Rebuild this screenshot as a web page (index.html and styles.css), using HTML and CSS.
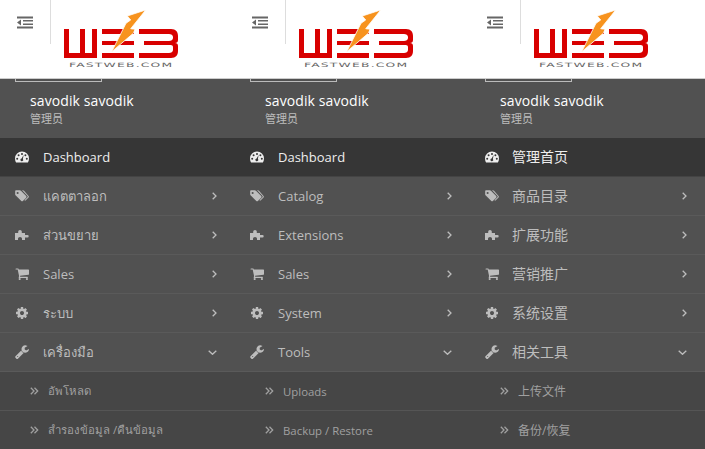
FILE: index.html
```html
<!DOCTYPE html>
<html lang="en">
<head>
  <meta charset="UTF-8">
  <meta name="viewport" content="width=device-width, initial-scale=1.0">
  <title>Admin menu</title>
  <link rel="stylesheet" href="styles.css">
</head>
<body>

  <svg class="sprites" aria-hidden="true">
    <symbol id="i-outdent" viewBox="0 0 16 12">
      <path d="M0 0h16v2H0zM0 10h16v2H0zM6 3.5h10v1.6H6zM6 6.9h10v1.6H6zM4 3v6L0 6z"/>
    </symbol>
    <symbol id="i-gauge" viewBox="0 0 14 11">
      <path fill-rule="evenodd" d="M7 0a7 7 0 0 1 7 7c0 1.500-.4 2.900-1.100 4H1.100A7.900 7.900 0 0 1 0 7a7 7 0 0 1 7-7zM7 1.400a1 1 0 1 0 0 2 1 1 0 0 0 0-2zM3.600 2.800a1 1 0 1 0 0 2 1 1 0 0 0 0-2zM10.400 2.800a1 1 0 1 0 0 2 1 1 0 0 0 0-2zM2.200 6.200a1 1 0 1 0 0 2 1 1 0 0 0 0-2zM11.800 6.200a1 1 0 1 0 0 2 1 1 0 0 0 0-2zM8.600 3.400 6.600 6.900a1.400 1.400 0 1 0 1.300.500z"/>
    </symbol>
    <symbol id="i-tags" viewBox="0 0 16 13">
      <path fill-rule="evenodd" d="M1 0h4.500c.5 0 1 .2 1.300.6l6 6c.5.5.5 1.300 0 1.800l-3.800 3.800c-.5.5-1.300.5-1.800 0l-6-6C.8 5.800.2 5.300.2 4.800V.8C.2.400.6 0 1 0zM3 1.800a1.200 1.200 0 1 0 0 2.400 1.200 1.200 0 0 0 0-2.400z"/>
      <path d="M8 0h1c.5 0 1 .2 1.300.6l5.200 5.800c.5.600.5 1.300 0 1.800l-3.800 3.800-.9-.6 3.500-3.600c.4-.4.400-.8 0-1.200L8.900.800z"/>
    </symbol>
    <symbol id="i-puzzle" viewBox="0 0 14 10">
      <path d="M0 3h3.200V1.500a1.800 1.500 0 0 1 3.600 0V3H10v2h2.500a1.200 1.200 0 0 1 0 2.400H10V10H7V8.500a2 1.500 0 0 0-4 0V10H0z"/>
    </symbol>
    <symbol id="i-cart" viewBox="0 192 1728 1472">
      <path d="M704 1536q0 52-38 90t-90 38-90-38-38-90 38-90 90-38 90 38 38 90zm896 0q0 52-38 90t-90 38-90-38-38-90 38-90 90-38 90 38 38 90zm128-1088v512q0 24-16.500 42.500t-40.500 21.500l-1044 122q13 60 13 70 0 16-24 64h920q26 0 45 19t19 45-19 45-45 19h-1024q-26 0-45-19t-19-45q0-11 8-31.500t16-36 21.500-40 15.500-29.500l-177-823h-204q-26 0-45-19t-19-45 19-45 45-19h256q16 0 28.500 6.500t19.500 15.500 13 24.500 8 26 5.500 29.500 4.500 26h1201q26 0 45 19t19 45z"/>
    </symbol>
    <symbol id="i-cog" viewBox="0 0 1792 1792">
      <path d="M1152 896q0-106-75-181t-181-75-181 75-75 181 75 181 181 75 181-75 75-181zm512-109v222q0 12-8 23t-20 13l-185 28q-19 54-39 91 35 50 107 138 10 12 10 25t-9 23q-27 37-99 108t-94 71q-12 0-26-9l-138-108q-44 23-91 38-16 136-29 186-7 28-36 28h-222q-14 0-24.500-8.500t-11.500-21.500l-28-184q-49-16-90-37l-141 107q-10 9-25 9-14 0-25-11-126-114-165-168-7-10-7-23 0-12 8-23 15-21 51-66.500t54-70.500q-27-50-41-99l-183-27q-13-2-21-12.500t-8-23.500v-222q0-12 8-23t19-13l186-28q14-46 39-92-40-57-107-138-10-12-10-24 0-10 9-23 26-36 98.500-107.500t94.500-71.500q13 0 26 10l138 107q44-23 91-38 16-136 29-186 7-28 36-28h222q14 0 24.500 8.500t11.500 21.500l28 184q49 16 90 37l142-107q9-9 24-9 13 0 25 10 129 119 165 170 7 8 7 22 0 12-8 23-15 21-51 66.500t-54 70.500q26 50 41 98l183 28q13 2 21 12.500t8 23.500z"/>
    </symbol>
    <symbol id="i-wrench" viewBox="64 96 1664 1664">
      <path d="M448 1472q0-26-19-45t-45-19-45 19-19 45 19 45 45 19 45-19 19-45zm644-420l-682 682q-37 37-90 37-52 0-91-37l-106-108q-38-36-38-90 0-53 38-91l681-681q39 98 114.500 173.500t173.500 114.500zm634-435q0 39-23 106-47 134-164.500 217.500t-258.500 83.500q-185 0-316.500-131.500t-131.500-316.500 131.500-316.500 316.500-131.500q58 0 121.500 16.500t107.500 46.500q16 11 16 28t-16 28l-293 169v224l193 107q5-3 79-48.500t135.500-81 70.500-35.500q15 0 23.500 10t8.500 25z"/>
    </symbol>
    <symbol id="i-right" viewBox="0 0 5 8">
      <path d="M.7.700 4 4 .7 7.300" fill="none" stroke="currentColor" stroke-width="1.300"/>
    </symbol>
    <symbol id="i-down" viewBox="0 0 9 5">
      <path d="M.7.700 4.500 4.300 8.300.700" fill="none" stroke="currentColor" stroke-width="1.300"/>
    </symbol>
    <symbol id="i-double" viewBox="0 0 9 8">
      <path d="M.8.800 4 4 .8 7.200M4.500.800 7.700 4 4.500 7.200" fill="none" stroke="currentColor" stroke-width="1.300"/>
    </symbol>
    <symbol id="i-logo" viewBox="0 0 120 50">
      <g fill="#d80000">
        <path d="M0 19h5v24h11V19h5v24h7V19h5v29H0z"/>
        <path d="M38 19h32v5H38zM38 31h32v4H38zM38 43h32v5H38z"/>
        <path d="M75 19h32c5 0 7 3 7 7v4c0 2-1 3-3 3 2 0 3 1 3 3v5c0 4-2 7-7 7H75v-5h30c2 0 4-1 4-3v-3c0-2-2-2-4-2H80v-4h25c2 0 4-1 4-3v-1c0-2-2-3-4-3H75z"/>
      </g>
      <path d="M81.700 0 63.300 6 66.700 10 62 13.300 47.700 41.700 69.300 23.300 71 19.300 66.700 18.700z" fill="#f7931e" stroke="#fff" stroke-width=".8"/>
    </symbol>
  </svg>

  <div class="panels">

    <section class="panel">
      <header class="topbar">
        <button class="toggle"><svg class="toggle-icon"><use href="#i-outdent"/></svg></button>
        <div class="logo">
          <svg class="logo-mark"><use href="#i-logo"/></svg>
          <span class="logo-text">FASTWEB.COM</span>
        </div>
      </header>
      <div class="profile">
        <div class="avatar"></div>
        <div class="name">savodik savodik</div>
        <div class="role">管理员</div>
      </div>
      <ul class="menu">
        <li class="item active"><svg class="icon"><use href="#i-gauge"/></svg><span>Dashboard</span></li>
        <li class="item"><svg class="icon"><use href="#i-tags"/></svg><span>แคตตาลอก</span><svg class="arrow"><use href="#i-right"/></svg></li>
        <li class="item"><svg class="icon"><use href="#i-puzzle"/></svg><span>ส่วนขยาย</span><svg class="arrow"><use href="#i-right"/></svg></li>
        <li class="item"><svg class="icon"><use href="#i-cart"/></svg><span>Sales</span><svg class="arrow"><use href="#i-right"/></svg></li>
        <li class="item"><svg class="icon"><use href="#i-cog"/></svg><span>ระบบ</span><svg class="arrow"><use href="#i-right"/></svg></li>
        <li class="item"><svg class="icon"><use href="#i-wrench"/></svg><span>เครื่องมือ</span><svg class="arrow-down"><use href="#i-down"/></svg></li>
        <li class="sub"><svg class="sub-icon"><use href="#i-double"/></svg><span>อัพโหลด</span></li>
        <li class="sub"><svg class="sub-icon"><use href="#i-double"/></svg><span>สำรองข้อมูล /คืนข้อมูล</span></li>
      </ul>
    </section>

    <section class="panel">
      <header class="topbar">
        <button class="toggle"><svg class="toggle-icon"><use href="#i-outdent"/></svg></button>
        <div class="logo">
          <svg class="logo-mark"><use href="#i-logo"/></svg>
          <span class="logo-text">FASTWEB.COM</span>
        </div>
      </header>
      <div class="profile">
        <div class="avatar"></div>
        <div class="name">savodik savodik</div>
        <div class="role">管理员</div>
      </div>
      <ul class="menu">
        <li class="item active"><svg class="icon"><use href="#i-gauge"/></svg><span>Dashboard</span></li>
        <li class="item"><svg class="icon"><use href="#i-tags"/></svg><span>Catalog</span><svg class="arrow"><use href="#i-right"/></svg></li>
        <li class="item"><svg class="icon"><use href="#i-puzzle"/></svg><span>Extensions</span><svg class="arrow"><use href="#i-right"/></svg></li>
        <li class="item"><svg class="icon"><use href="#i-cart"/></svg><span>Sales</span><svg class="arrow"><use href="#i-right"/></svg></li>
        <li class="item"><svg class="icon"><use href="#i-cog"/></svg><span>System</span><svg class="arrow"><use href="#i-right"/></svg></li>
        <li class="item"><svg class="icon"><use href="#i-wrench"/></svg><span>Tools</span><svg class="arrow-down"><use href="#i-down"/></svg></li>
        <li class="sub"><svg class="sub-icon"><use href="#i-double"/></svg><span>Uploads</span></li>
        <li class="sub"><svg class="sub-icon"><use href="#i-double"/></svg><span>Backup / Restore</span></li>
      </ul>
    </section>

    <section class="panel panel-cn">
      <header class="topbar">
        <button class="toggle"><svg class="toggle-icon"><use href="#i-outdent"/></svg></button>
        <div class="logo">
          <svg class="logo-mark"><use href="#i-logo"/></svg>
          <span class="logo-text">FASTWEB.COM</span>
        </div>
      </header>
      <div class="profile">
        <div class="avatar"></div>
        <div class="name">savodik savodik</div>
        <div class="role">管理员</div>
      </div>
      <ul class="menu">
        <li class="item active"><svg class="icon"><use href="#i-gauge"/></svg><span>管理首页</span></li>
        <li class="item"><svg class="icon"><use href="#i-tags"/></svg><span>商品目录</span><svg class="arrow"><use href="#i-right"/></svg></li>
        <li class="item"><svg class="icon"><use href="#i-puzzle"/></svg><span>扩展功能</span><svg class="arrow"><use href="#i-right"/></svg></li>
        <li class="item"><svg class="icon"><use href="#i-cart"/></svg><span>营销推广</span><svg class="arrow"><use href="#i-right"/></svg></li>
        <li class="item"><svg class="icon"><use href="#i-cog"/></svg><span>系统设置</span><svg class="arrow"><use href="#i-right"/></svg></li>
        <li class="item"><svg class="icon"><use href="#i-wrench"/></svg><span>相关工具</span><svg class="arrow-down"><use href="#i-down"/></svg></li>
        <li class="sub"><svg class="sub-icon"><use href="#i-double"/></svg><span>上传文件</span></li>
        <li class="sub"><svg class="sub-icon"><use href="#i-double"/></svg><span>备份/恢复</span></li>
      </ul>
    </section>

  </div>

</body>
</html>
```

FILE: styles.css
```css
* {
  margin: 0;
  padding: 0;
  box-sizing: border-box;
}

html, body {
  height: 100%;
  overflow: hidden;
}

body {
  background-color: #515151;
  color: #bdbdbd;
  font-family: 'Open Sans', 'Noto Sans', 'Noto Sans CJK SC', sans-serif;
  font-size: 13px;
}

.sprites {
  display: none;
}

.panels {
  display: grid;
  grid-template-columns: repeat(3, 235px);
}

.panel {
  height: 449px;
  overflow: hidden;
}

/* top bar */
.topbar {
  display: flex;
  align-items: flex-start;
  height: 79px;
  background-color: #fff;
  border-bottom: 1px solid #ccc;
}

.toggle {
  display: flex;
  justify-content: center;
  width: 51px;
  height: 44px;
  padding-top: 16px;
  background: none;
  border: none;
  border-right: 1px solid #ddd;
  color: #666;
}

.toggle-icon {
  width: 16px;
  height: 13px;
  fill: currentColor;
}

.logo {
  display: flex;
  flex-direction: column;
  margin-left: 13px;
  padding-top: 10px;
}

.logo-mark {
  width: 120px;
  height: 50px;
}

.logo-text {
  margin: 2px 0 0 5px;
  color: #666;
  font-family: 'DejaVu Sans', sans-serif;
  font-size: 6px;
  letter-spacing: .6px;
  line-height: 6px;
  transform: scaleX(2.05);
  transform-origin: left;
}

/* user block */
.profile {
  display: flex;
  flex-direction: column;
  height: 59px;
  padding-left: 15px;
  color: #fff;
}

.avatar {
  width: 87px;
  height: 3px;
  border: 1px solid #bbb;
  border-top: none;
}

.name {
  margin: 9px 0 0 15px;
  font-size: 14px;
  letter-spacing: .1px;
  line-height: 20px;
}

.role {
  margin: 0 0 0 15px;
  color: #bdbdbd;
  font-size: 11px;
  line-height: 15px;
}

/* menu */
.menu {
  list-style: none;
}

.item {
  display: flex;
  align-items: center;
  height: 39px;
  padding-left: 15px;
  border-bottom: 1px solid #5a5a5a;
}

.item span {
  flex: 1;
}

.active {
  background-color: #363636;
  border-bottom-color: #444;
  color: #eee;
}

.icon {
  flex: none;
  width: 14px;
  height: 14px;
  margin-right: 14px;
  fill: currentColor;
}

.arrow {
  width: 5px;
  height: 8px;
  margin-right: 18px;
}

.arrow-down {
  width: 9px;
  height: 5px;
  margin-right: 18px;
}

.sub {
  display: flex;
  align-items: center;
  height: 39px;
  padding-left: 30px;
  background-color: #464646;
  border-bottom: 1px solid #555;
  color: #a0a0a0;
  font-size: 11.4px;
}

.sub-icon {
  flex: none;
  width: 9px;
  height: 8px;
  margin-right: 9px;
}

.panel-cn .item {
  font-size: 14px;
}

.panel-cn .item span {
  margin: -2px 0 0 -1px;
}

.panel-cn .sub {
  font-size: 12px;
}
```
